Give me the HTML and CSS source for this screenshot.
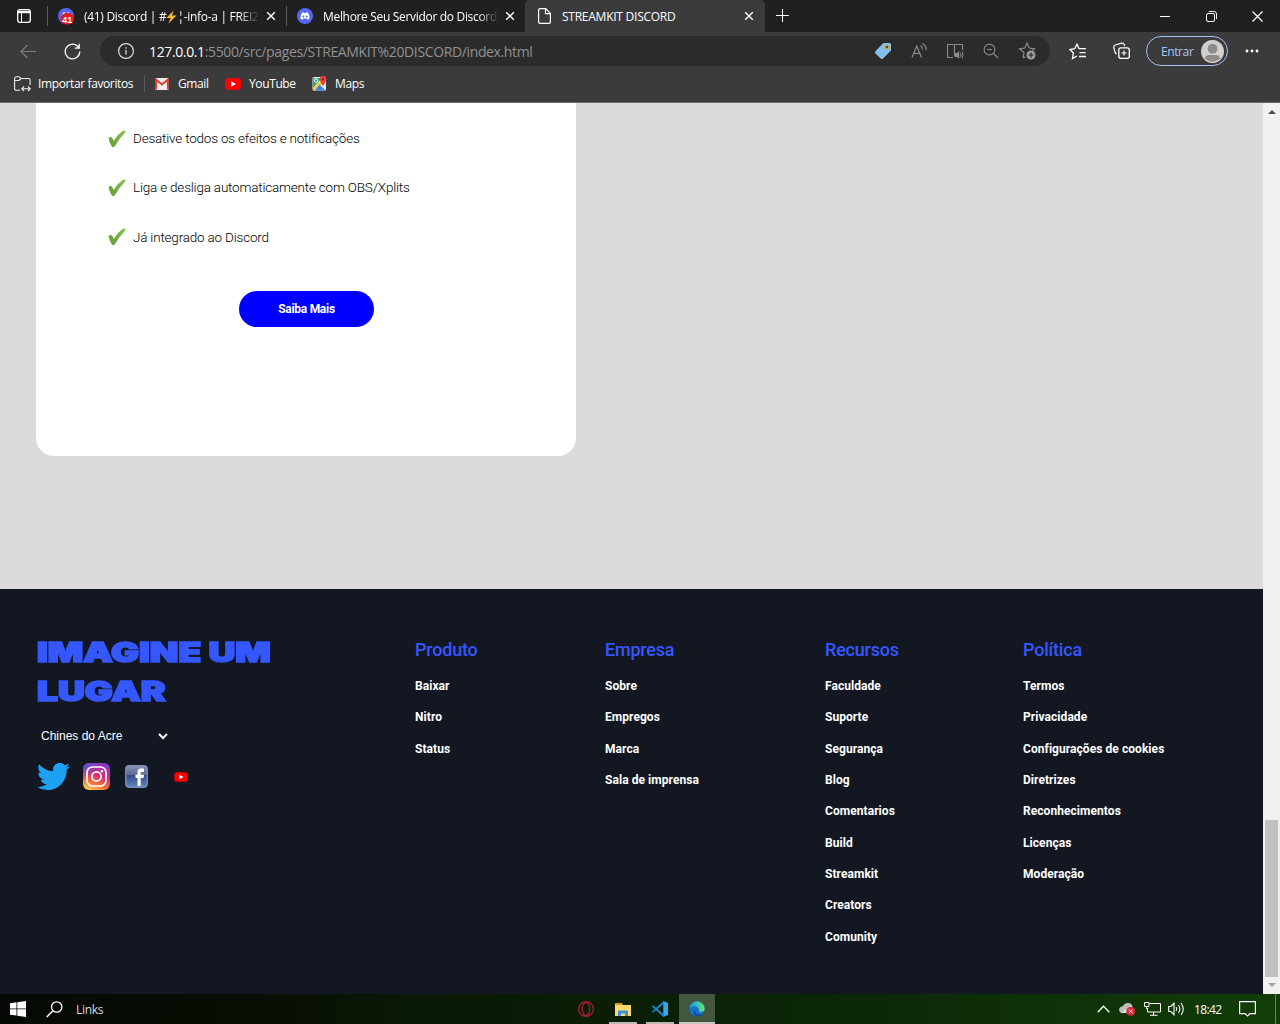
FILE: index.html
```html
<!DOCTYPE html>
<html lang="pt-BR">
<head>
<meta charset="utf-8">
<title>STREAMKIT DISCORD</title>
<link rel="stylesheet" href="styles.css">
</head>
<body>
<svg class="defs" width="0" height="0">
  <defs>
    <symbol id="close" viewBox="0 0 10 10"><path d="M1.2 1.2l7.6 7.6M8.8 1.2L1.2 8.8" fill="none" stroke="#fff" stroke-width="1.4"/></symbol>
    <symbol id="clyde" viewBox="0 0 16 16"><circle cx="8" cy="8" r="8" fill="#5865f2"/><path d="M5.2 4.6L6.7 4.300L7 5H9L9.300 4.300L10.8 4.6Q12.7 7.2 12.7 10.4Q11.6 11.4 10.3 11.6L9.6 10.6H6.4L5.7 11.6Q4.4 11.4 3.3 10.4Q3.3 7.2 5.2 4.6Z" fill="#fff"/><circle cx="6.3" cy="8.4" r="1" fill="#5865f2"/><circle cx="9.7" cy="8.4" r="1" fill="#5865f2"/></symbol>
    <symbol id="check" viewBox="0 0 18 18"><linearGradient id="leaf" x1="0" y1="1" x2="1" y2="0"><stop offset="0" stop-color="#5f9e36"/><stop offset="1" stop-color="#8bc34a"/></linearGradient><path d="M.5 8.2Q.9 7 2.4 6.9L4 7.2L5.7 11Q9.5 4.5 14.5 1.1Q16 .2 17.5 1Q17.7 2 16.8 3Q10.5 9.3 6.9 16.2Q5.5 17.4 4 16.8Q1.5 12.8.5 8.2Z" fill="url(#leaf)"/></symbol>
    <symbol id="yt" viewBox="0 0 16 12"><rect y=".3" width="16" height="11.4" rx="2.6" fill="#f00"/><path d="M6.2 3.3v5.4L11 6z" fill="#fff"/></symbol>
  </defs>
</svg>

<header class="tabs">
  <div class="tab-menu"><svg width="14" height="14" viewBox="0 0 14 14"><rect x=".7" y=".7" width="12.6" height="12.6" rx="2" fill="none" stroke="#fff" stroke-width="1.3"/><path d="M1 1.8h12v2.4H1z" fill="#fff"/><path d="M4.5 3v10" stroke="#fff"/></svg></div>
  <div class="tab">
    <svg width="17" height="17" viewBox="0 0 17 17"><use href="#clyde" width="16" height="16"/><rect x="2.5" y="5" width="13.5" height="11.5" rx="5.7" fill="#e01b24"/><text x="9.2" y="14.8" class="badge">41</text></svg>
    <span class="tab-title t1">(41) Discord | #<svg width="11" height="14" viewBox="0 0 11 14"><path d="M7.5.5L.5 8h4L2.5 13.5L10.5 5.6H6z" fill="#ffb52e"/></svg>¦-info-a | FREI2</span>
    <svg width="10" height="10"><use href="#close"/></svg>
  </div>
  <div class="tab second">
    <svg width="16" height="16"><use href="#clyde"/></svg>
    <span class="tab-title t2">Melhore Seu Servidor do Discord</span>
    <svg width="10" height="10"><use href="#close"/></svg>
  </div>
  <div class="tab active">
    <svg width="13" height="16" viewBox="0 0 13 16"><path d="M2.2.6h5.5l4.7 4.8v8.4q0 1.6-1.6 1.6H2.2Q.6 15.4.6 13.8V2.2Q.6.6 2.2.6zM7.5.8v4.8h4.7" fill="none" stroke="#fff" stroke-width="1.2"/></svg>
    <span class="tab-title t3">STREAMKIT DISCORD</span>
    <svg width="10" height="10"><use href="#close"/></svg>
  </div>
  <svg class="new-tab" width="14" height="14" viewBox="0 0 14 14"><path d="M6.500 0v13M0 6.500h13" stroke="#fff" stroke-width="1.1"/></svg>
  <div class="window-buttons">
    <i><svg width="11" height="11"><path d="M0 5.500h10" stroke="#fff"/></svg></i>
    <i><svg width="11" height="11" viewBox="0 0 11 11"><rect x=".5" y="2.5" width="8" height="8" rx="1.5" fill="none" stroke="#fff"/><path d="M2.8.5h5Q10.500.5 10.500 3v5" fill="none" stroke="#fff"/></svg></i>
    <i><svg width="11" height="11"><path d="M.5.5l10 10M10.500.5L.5 10.500" stroke="#fff" stroke-width="1.200"/></svg></i>
  </div>
</header>

<nav class="toolbar">
  <svg class="back" width="17" height="15" viewBox="0 0 17 15"><path d="M16 7.500H1M7.500 1L1 7.500L7.500 14" fill="none" stroke="#7c7c7c" stroke-width="1.200"/></svg>
  <svg class="reload" width="17" height="17" viewBox="0 0 17 17"><path d="M15.800 8.500A7.300 7.300 0 1 1 13.500 3.200L15 4.800M15.200.7v4.400h-4.400" fill="none" stroke="#fff" stroke-width="1.300"/></svg>
  <div class="address">
    <svg class="info" width="16" height="16" viewBox="0 0 16 16"><circle cx="8" cy="8" r="7.400" fill="none" stroke="#ddd" stroke-width="1.200"/><path d="M8 7v4.500M8 4.200v1.500" stroke="#ddd" stroke-width="1.300"/></svg>
    <span class="url"><b>127.0.0.1</b>:5500/src/pages/STREAMKIT%20DISCORD/index.html</span>
    <div class="address-icons">
      <svg width="18" height="18" viewBox="0 0 18 18"><path d="M9.500 1H16l1 1v6.500L8.500 17H7.200L1 11V9.500z" fill="#83beec"/><circle cx="13" cy="5" r="1.900" fill="#4c4a32" stroke="#d8a92c" stroke-width="1.200"/></svg>
      <svg width="18" height="18" viewBox="0 0 18 18"><path d="M2 15.500L6.800 4l4.700 11.500M3.800 11.300h6M10.500 3.500q2.200 1.200 2 4M12.500 1.500q4 2 3.600 6.500" fill="none" stroke="#8b8b8b" stroke-width="1.200"/></svg>
      <svg width="18" height="18" viewBox="0 0 18 18"><path d="M8.500 2.500v12M7 15.500H1.500v-13H7q1.500 0 1.500 1.200Q8.500 2.500 10 2.500h6.500V8" fill="none" stroke="#8b8b8b" stroke-width="1.100"/><path d="M9 11h2l2.200-2v8L11 15H9z" fill="#8b8b8b"/><path d="M14.500 11q1 2 0 4M16 9.500q2 3.500 0 7" fill="none" stroke="#8b8b8b"/></svg>
      <svg width="18" height="18" viewBox="0 0 18 18"><circle cx="7.500" cy="7.500" r="5.400" fill="none" stroke="#8b8b8b" stroke-width="1.100"/><path d="M5 7.500h5M11.500 11.500l4.500 4.500" stroke="#8b8b8b" stroke-width="1.200"/></svg>
      <svg width="18" height="18" viewBox="0 0 18 18"><path d="M5 16l1-5.500L1.500 6.800l5.300-.8L9 1l2.300 5 5.200.8-2 1.700M5 16l2.500-1.300" fill="none" stroke="#8b8b8b" stroke-width="1.200"/><circle cx="13" cy="13" r="4.500" fill="#9c9c9c"/><path d="M13 10.500v5M10.500 13h5" stroke="#2b2b2b" stroke-width="1.200"/></svg>
    </div>
  </div>
  <svg class="favorites-icon" width="18" height="17" viewBox="0 0 18 17"><path d="M10 5.700L8 1.200L5.700 5.700L.9 6.500L4.400 10L3.500 15.500L8 13M10 5.700h7M10.500 9.700h6M10 13.500h7" fill="none" stroke="#fff" stroke-width="1.300"/></svg>
  <svg class="collections" width="18" height="18" viewBox="0 0 18 18"><rect x="5.800" y="5.800" width="10.500" height="10.500" rx="2" fill="none" stroke="#fff" stroke-width="1.300"/><path d="M11 8.500v5M8.500 11h5M3.600 12Q2.400 11.500 2 10L.8 5.500Q.5 3.500 2.300 3L8.500 1.200Q10.500.9 11.200 2.500L11.700 4" fill="none" stroke="#fff" stroke-width="1.200"/></svg>
  <div class="profile"><span>Entrar</span><svg width="23" height="23" viewBox="0 0 23 23"><circle cx="11.500" cy="11.500" r="11.500" fill="#d2d0ce"/><circle cx="11.500" cy="8.700" r="4.900" fill="#8f8b88"/><path d="M3.700 18.200Q5 15 8 15h7q3 0 4.300 3.200a10.500 10.500 0 0 1-15.600 0z" fill="#8f8b88"/></svg></div>
  <svg class="more" width="14" height="4"><circle cx="2" cy="2" r="1.400" fill="#fff"/><circle cx="7" cy="2" r="1.400" fill="#fff"/><circle cx="12" cy="2" r="1.400" fill="#fff"/></svg>
</nav>

<nav class="bookmarks">
  <svg class="folder" width="17" height="16" viewBox="0 0 17 16"><path d="M6 14.300H2.500Q.6 14.300.6 12.500v-10Q.6.700 2.500.700H5L7 2.500h7.500q1.600 0 1.600 1.600V9M.6 4.500H5L7 2.500M8 12.700h8M10 10.500L7.800 12.700L10 15M14 10.500l2.200 2.200L14 15" fill="none" stroke="#eee" stroke-width="1.100"/></svg>
  <span class="import">Importar favoritos</span>
  <svg class="gmail" width="14" height="12" viewBox="0 0 14 12"><rect width="14" height="12" rx="1" fill="#eee"/><path d="M1 11.500V1.500L7 6.500l6-5v10" fill="none" stroke="#d93e32" stroke-width="2"/></svg>
  <span class="gm">Gmail</span>
  <svg class="youtube" width="16" height="12"><use href="#yt"/></svg>
  <span class="ytb">YouTube</span>
  <svg class="maps" width="15" height="15" viewBox="0 0 15 15"><rect x=".5" y="1" width="13.500" height="13.500" rx="1.500" fill="#eee"/><path d="M1 2h9L1 12z" fill="#2fa866"/><path d="M1 12L9.500 4l2 3L4 14.500H1z" fill="#f5ca48"/><path d="M7.500 8.500l6 6H3z" fill="#4285f4"/><circle cx="4" cy="4.500" r="1.700" fill="none" stroke="#fff"/><path d="M11 10Q7.800 5.500 7.800 3.200a3.200 3.200 0 0 1 6.400 0Q14.200 5.500 11 10z" fill="#e94235"/><circle cx="11" cy="3.200" r="1.100" fill="#8b211b"/></svg>
  <span class="mp">Maps</span>
</nav>

<div class="viewport">
  <div class="page">
    <main>
      <section class="card">
        <ul class="features">
          <li><svg width="18" height="18"><use href="#check"/></svg><span class="f1">Desative todos os efeitos e notificações</span></li>
          <li><svg width="18" height="18"><use href="#check"/></svg><span class="f2">Liga e desliga automaticamente com OBS/Xplits</span></li>
          <li><svg width="18" height="18"><use href="#check"/></svg><span class="f3">Já integrado ao Discord</span></li>
        </ul>
        <a class="button">Saiba Mais</a>
      </section>
    </main>
    <footer>
      <div class="brand">
        <h2>IMAGINE UM<br>LUGAR</h2>
        <div class="language"><span>Chines do Acre</span><svg width="10" height="7"><path d="M1 1l4 4 4-4" fill="none" stroke="#fff" stroke-width="2"/></svg></div>
        <div class="social">
          <svg class="twitter" width="33" height="27" viewBox="0 0 24 19.500" preserveAspectRatio="none"><path fill="#1da1f2" d="M23.950 2.310a10 10 0 0 1-2.820.770 4.960 4.960 0 0 0 2.160-2.720 10 10 0 0 1-3.120 1.190A4.920 4.920 0 0 0 11.780 6 14 14 0 0 1 1.640.900a4.920 4.920 0 0 0 1.520 6.570A5 5 0 0 1 .930 6.860v.060a4.920 4.920 0 0 0 3.950 4.830 5 5 0 0 1-2.210.080 4.940 4.940 0 0 0 4.600 3.420A9.870 9.870 0 0 1 0 17.290a14 14 0 0 0 7.550 2.210c9.050 0 14-7.500 14-13.980q0-.320-.020-.630a10 10 0 0 0 2.420-2.580z"/></svg>
          <svg class="instagram" width="27" height="27" viewBox="0 0 27 27"><defs><linearGradient id="ig" x1=".2" y1="1" x2=".6" y2="0"><stop offset="0" stop-color="#ffcf4f"/><stop offset=".3" stop-color="#fa6b38"/><stop offset=".6" stop-color="#db2b76"/><stop offset="1" stop-color="#8a35cc"/></linearGradient><radialGradient id="igb" cx="0" cy="0" r=".6"><stop stop-color="#3c5de0"/><stop offset="1" stop-color="#3c5de0" stop-opacity="0"/></radialGradient></defs><rect width="27" height="27" rx="6" fill="url(#ig)"/><rect width="27" height="27" rx="6" fill="url(#igb)"/><rect x="4" y="4" width="19" height="19" rx="5.500" fill="none" stroke="#fff" stroke-width="1.700"/><circle cx="13.500" cy="13.500" r="4.600" fill="none" stroke="#fff" stroke-width="1.700"/><circle cx="18.900" cy="8.200" r="1.200" fill="#fff"/></svg>
          <svg class="facebook" width="23" height="23" viewBox="0 0 23 23"><defs><linearGradient id="fb" x2="0" y2="1"><stop stop-color="#8893b4"/><stop offset=".42" stop-color="#596a98"/><stop offset=".45" stop-color="#334d87"/><stop offset="1" stop-color="#6287c4"/></linearGradient></defs><rect x=".7" y=".7" width="21.600" height="21.600" rx="3.500" fill="url(#fb)" stroke="#8192b8" stroke-width="1.200"/><path d="M12.500 21v-8h-2V9.800h2V7.500Q12.500 3.600 16 3.600h3V7h-2q-1.300 0-1.300 1.300v1.500H19l-.4 3.200h-2.900v8z" fill="#fff"/></svg>
          <svg class="yt-small" width="14" height="10"><use href="#yt"/></svg>
        </div>
      </div>
      <div class="links"><h3>Produto</h3><a>Baixar</a><a>Nitro</a><a>Status</a></div>
      <div class="links"><h3>Empresa</h3><a>Sobre</a><a>Empregos</a><a>Marca</a><a>Sala de imprensa</a></div>
      <div class="links"><h3>Recursos</h3><a>Faculdade</a><a>Suporte</a><a>Segurança</a><a>Blog</a><a>Comentarios</a><a>Build</a><a>Streamkit</a><a>Creators</a><a>Comunity</a></div>
      <div class="links"><h3>Política</h3><a>Termos</a><a>Privacidade</a><a>Configurações de cookies</a><a>Diretrizes</a><a>Reconhecimentos</a><a>Licenças</a><a>Moderação</a></div>
    </footer>
  </div>
  <div class="scrollbar">
    <svg width="8" height="4"><path d="M0 4l4-4 4 4z" fill="#505050"/></svg>
    <div class="thumb"></div>
    <svg width="8" height="4"><path d="M0 0l4 4 4-4z" fill="#a3a3a3"/></svg>
  </div>
</div>

<div class="taskbar">
  <svg class="start" width="16" height="16" viewBox="0 0 16 16"><path d="M0 2.200L6.500 1.300V7.500H0zM7.300 1.200L16 0v7.500H7.300zM0 8.300h6.500v6.300L0 13.700zM7.300 8.300H16V16L7.300 14.800z" fill="#fff"/></svg>
  <svg class="search" width="17" height="17" viewBox="0 0 17 17"><circle cx="10.700" cy="6" r="5.200" fill="none" stroke="#fff" stroke-width="1.300"/><path d="M7 9.700L.7 16" stroke="#fff" stroke-width="1.500"/></svg>
  <span class="links-label">Links</span>
  <div class="apps">
    <i><svg width="16" height="16" viewBox="0 0 16 16"><ellipse cx="8" cy="8" rx="7.400" ry="7.400" fill="none" stroke="#aa1d35" stroke-width="1.200"/><ellipse cx="8" cy="8" rx="3.700" ry="6.500" fill="none" stroke="#aa1d35" stroke-width="1.200"/></svg></i>
    <i class="open"><svg width="16" height="15" viewBox="0 0 16 15"><path d="M0 1h7l1 2H0z" fill="#d99a13"/><path d="M0 3h16v11H0z" fill="#ffda6b"/><path d="M3 14V8.500h10V14h-3v-2.500H6V14z" fill="#3e91d9"/></svg></i>
    <i class="open"><svg width="16" height="16" viewBox="0 0 16 16"><path d="M11.500 3L1 11.800L0 11V10.500L11.500 0z" fill="#1482ca"/><path d="M11.500 13L1 4.200L0 5v.5L11.500 16z" fill="#168bd4"/><path d="M11.300 0L16 2v12l-4.700 2z" fill="#2fa9f2"/></svg></i>
    <i class="open current"><svg width="16" height="16" viewBox="0 0 17 17"><defs><linearGradient id="ed" x1="0" y1=".5" x2="1" y2=".4"><stop stop-color="#168bd8"/><stop offset=".5" stop-color="#35c1c8"/><stop offset="1" stop-color="#70e64b"/></linearGradient></defs><circle cx="8.500" cy="8.500" r="8" fill="#1473c8"/><path d="M.5 8.500A8 8 0 0 1 16.500 8q.2 3.500-3.500 3.500-3.500 0-2.500-2Q10.500 6 6.500 5.500 2 5.500.5 8.500z" fill="url(#ed)"/><path d="M6.500 7.500Q5 13 10 14.300q3 .6 5-.9Q12 17.500 8 16.400 3 14.500 6.500 7.500z" fill="#114a96"/></svg></i>
  </div>
  <div class="tray">
    <svg class="chevron" width="13" height="8"><path d="M.7 7.200L6.500 1.200l5.800 6" fill="none" stroke="#fff" stroke-width="1.300"/></svg>
    <svg class="cloud" width="17" height="14" viewBox="0 0 17 14"><path d="M0 7Q1 4.500 4 4 6 .3 10 1q3 .7 3.500 4L7 11H2.500Q0 10 0 7z" fill="#bbc0b6"/><path d="M2 11L12 3.500l3 4.500-5 3z" fill="#eee"/><circle cx="11.700" cy="9.300" r="4.500" fill="#d92b38"/><path d="M10 7.600l3.400 3.400M13.400 7.600L10 11" stroke="#fff"/></svg>
    <svg class="network" width="17" height="14" viewBox="0 0 17 14"><path d="M5.500 1.500h11v8.500H3.500V6M9.500 10v3M6 13.300h7.500M.5.500h4.500v4H.5zM2.700 4.500V7" fill="none" stroke="#fff"/></svg>
    <svg class="sound" width="17" height="14" viewBox="0 0 17 14"><path d="M.7 4.500h2.200L6 1.300v11.400L2.900 9.500H.7zM8 5q1.300 2 0 4M10.500 3q2.800 4 0 8M13 1q4.500 6 0 12" fill="none" stroke="#fff" stroke-width="1.100"/></svg>
    <span class="clock">18:42</span>
    <svg class="notice" width="17" height="16" viewBox="0 0 17 16"><path d="M.6.600h15.800v12H11L8.500 15 6 12.600H.6z" fill="none" stroke="#fff" stroke-width="1.200"/></svg>
  </div>
</div>
</body>
</html>
```
FILE: styles.css
```css
* { box-sizing: border-box; }
body { margin: 0; width: 1280px; height: 1024px; overflow: hidden; display: flex; flex-direction: column; font-family: "Open Sans", sans-serif; font-size: 12px; color: #fff; background: #3b3b3b; }
svg { display: block; flex: none; }
.defs { position: absolute; }
i { font-style: normal; }
span { white-space: nowrap; }

.tabs { height: 32px; flex: none; display: flex; align-items: center; background: #202020; }
.tab-menu { width: 48px; height: 20px; display: flex; align-items: center; padding-left: 17px; border-right: 1px solid #5d5d5d; }
.tab { width: 239px; height: 20px; display: flex; align-items: center; padding: 0 10px; border-right: 1px solid #5d5d5d; }
.tab.second { width: 238px; border: 0; }
.tab.active { width: 240px; height: 32px; border: 0; padding: 0 11px 0 13px; background: #3b3b3b; border-radius: 5px 5px 0 0; }
.tab-title { flex: 1; overflow: hidden; margin: 0 6px 0 9px; letter-spacing: -.3px; }
.tab-title svg { display: inline-block; vertical-align: -3px; }
.t1, .t2 { -webkit-mask-image: linear-gradient(90deg, #000 88%, transparent); mask-image: linear-gradient(90deg, #000 88%, transparent); }
.tab .t2 { margin-left: 10px; letter-spacing: -.32px; }
.tab .t3 { margin-left: 11px; letter-spacing: -.25px; }
.badge { font: bold 9px "Liberation Sans", sans-serif; fill: #fff; text-anchor: middle; }
.new-tab { margin-left: 11px; }
.window-buttons { display: flex; margin-left: auto; }
.window-buttons i { width: 46px; display: flex; justify-content: center; }

.toolbar { height: 38px; flex: none; display: flex; align-items: center; padding-left: 20px; }
.reload { margin-left: 27px; }
.address { width: 950px; height: 30px; margin-left: 19px; padding: 0 14px 0 18px; display: flex; align-items: center; border-radius: 15px; background: #2b2b2b; }
.url { margin-left: 15px; font-size: 14px; letter-spacing: -.37px; color: #919191; }
.url b { color: #fff; font-weight: 400; }
.address-icons { display: flex; gap: 18px; margin-left: auto; }
.favorites-icon { margin-left: 19px; }
.collections { margin-left: 26px; }
.profile { width: 82px; height: 30px; margin-left: 15px; padding: 0 3px 0 14px; border: 1px solid #a3c1f0; border-radius: 15px; display: flex; align-items: center; justify-content: space-between; color: #a9c7f8; }
.profile span { letter-spacing: -.4px; }
.more { margin-left: 17px; }

.bookmarks { height: 33px; flex: none; display: flex; align-items: center; padding: 0 0 5px 14px; border-bottom: 1px solid #6b6b6b; }
.bookmarks span { letter-spacing: -.38px; }
.import { width: 107px; margin-left: 7px; border-right: 1px solid #5d5d5d; }
.gmail { margin-left: 10px; }
.gm { width: 39px; margin-left: 9px; }
.youtube { margin-left: 8px; }
.ytb { width: 55px; margin-left: 8px; }
.maps { margin-left: 8px; }
.mp { margin-left: 8px; }

.viewport { height: 891px; flex: none; display: flex; }
.page { width: 1263px; display: flex; flex-direction: column; }
main { height: 486px; padding-left: 36px; background: #dadada; }
.card { width: 540px; height: 353px; padding-top: 11px; background: #fff; border-radius: 0 0 18px 18px; display: flex; flex-direction: column; }
.features { list-style: none; margin: 0; padding: 0 0 0 72px; font: 300 13.5px/49.3px Roboto, sans-serif; letter-spacing: -.2px; color: #000; }
.features li { height: 49.3px; display: flex; align-items: center; gap: 7px; }
.button { width: 135px; height: 36px; margin: 29px 0 0 203px; border-radius: 18px; background: #00f; display: grid; place-items: center; font: 700 12px Roboto, sans-serif; letter-spacing: -.28px; }

footer { flex: 1; padding: 48px 0 0 37px; background: #131722; display: grid; grid-template-columns: 378px 190px 220px 198px 1fr; font-family: Roboto, sans-serif; }
h2 { margin: -4px 0 0; width: 200px; font: 900 27px/39px Inter, sans-serif; color: #3557ff; white-space: nowrap; -webkit-text-stroke: 1.6px #3557ff; transform: scaleX(1.375); transform-origin: 0 0; }
.language { height: 28px; margin-top: 11px; padding-left: 4px; display: flex; align-items: center; gap: 36px; font: 12px "Liberation Sans", sans-serif; }
.social { height: 27px; margin-top: 13px; display: flex; align-items: center; }
.instagram { margin-left: 13px; }
.facebook { margin-left: 15px; }
.yt-small { margin-left: 26px; }
.links { display: flex; flex-direction: column; }
.links h3 { margin: 0 0 8px; font: 500 18px/26px Roboto, sans-serif; letter-spacing: -.2px; color: #3557ff; }
.links a { font: 700 12px/31.35px Roboto, sans-serif; letter-spacing: .06px; white-space: nowrap; }

.scrollbar { width: 17px; background: #f1f1f1; display: flex; flex-direction: column; align-items: center; padding: 7px 0; }
.thumb { width: 13px; height: 157px; margin: auto 0 6px; background: #c1c1c1; }

.taskbar { height: 30px; flex: none; display: flex; align-items: center; padding-left: 10px; background: linear-gradient(90deg, #050903, #080e04 20%, #0a1905 33%, #0a2306 60%, #123d09); }
.search { margin-left: 20px; }
.links-label { width: 54px; margin-left: 13px; letter-spacing: -.3px; color: #ddd; }
.apps { display: flex; margin-left: 438px; height: 30px; }
.apps i { width: 36px; margin-right: 1px; display: grid; place-items: center; }
.apps .open { background: linear-gradient(#bcb8b2, #bcb8b2) 50% 100% / 28px 2px no-repeat; }
.apps .current { background: linear-gradient(#c8c4c0, #c8c4c0) 50% 100% / 36px 2px no-repeat, #43563e; }
.tray { display: flex; align-items: center; margin-left: auto; width: 183px; height: 30px; padding-right: 4px; border-right: 1px solid #6b8466; margin-right: 4px; width: 179px; }
.cloud { margin-left: 9px; }
.network { margin-left: 8px; }
.sound { margin-left: 7px; }
.clock { width: 28px; margin-left: 9px; letter-spacing: -.6px; }
.notice { margin-left: 17px; }
```
